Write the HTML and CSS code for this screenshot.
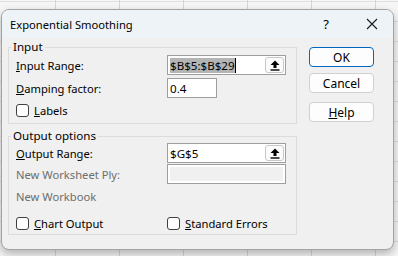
FILE: index.html
```html
<!DOCTYPE html>
<html lang="en">
<head>
    <meta charset="UTF-8">
    <meta name="viewport" content="width=device-width, initial-scale=1.0">
    <title>Exponential Smoothing</title>
    <link rel="stylesheet" href="styles.css">
</head>
<body>
    <div class="dialog">
        <div class="titlebar">
            <span class="title">Exponential Smoothing</span>
            <span class="help-mark">?</span>
            <svg class="close" width="12" height="12" viewBox="0 0 12 12">
                <path d="M1 1 L11 11 M11 1 L1 11" stroke="#1a1a1a" stroke-width="1.1" fill="none"/>
            </svg>
        </div>
        <div class="content">
            <div class="groups">
                <fieldset class="group input-group">
                    <legend>Input</legend>
                    <div class="row">
                        <div class="label"><u>I</u>nput Range:</div>
                        <div class="field wide">
                            <span class="value"><span class="selected">$B$5:$B$29</span><span class="caret"></span></span>
                            <span class="pick">
                                <svg width="10" height="11" viewBox="0 0 10 11">
                                    <path d="M5 0.5 L9.5 5 L6.5 5 L6.5 8 L3.5 8 L3.5 5 L0.5 5 Z" fill="#000"/>
                                    <rect x="0.5" y="9.3" width="9" height="1.4" fill="#000"/>
                                </svg>
                            </span>
                        </div>
                    </div>
                    <div class="row">
                        <div class="label"><u>D</u>amping factor:</div>
                        <div class="field short"><span class="value">0.4</span></div>
                    </div>
                    <div class="check-row">
                        <span class="box"></span><span><u>L</u>abels</span>
                    </div>
                </fieldset>
                <fieldset class="group output-group">
                    <legend>Output options</legend>
                    <div class="row">
                        <div class="label"><u>O</u>utput Range:</div>
                        <div class="field wide">
                            <span class="value">$G$5</span>
                            <span class="pick">
                                <svg width="10" height="11" viewBox="0 0 10 11">
                                    <path d="M5 0.5 L9.5 5 L6.5 5 L6.5 8 L3.5 8 L3.5 5 L0.5 5 Z" fill="#000"/>
                                    <rect x="0.5" y="9.3" width="9" height="1.4" fill="#000"/>
                                </svg>
                            </span>
                        </div>
                    </div>
                    <div class="row tight">
                        <div class="label disabled">New Worksheet Ply:</div>
                        <div class="field wide off"><span class="fill"></span></div>
                    </div>
                    <div class="row plain">
                        <div class="label disabled">New Workbook</div>
                    </div>
                    <div class="check-pair">
                        <div class="check-row"><span class="box"></span><span><u>C</u>hart Output</span></div>
                        <div class="check-row"><span class="box"></span><span><u>S</u>tandard Errors</span></div>
                    </div>
                </fieldset>
            </div>
            <div class="buttons">
                <button class="btn default">OK</button>
                <button class="btn">Cancel</button>
                <button class="btn help"><u>H</u>elp</button>
            </div>
        </div>
    </div>
</body>
</html>
```

FILE: styles.css
```css
body {
    margin: 0;
    padding: 9px 4px 0 1px;
    height: 256px;
    box-sizing: border-box;
    overflow: hidden;
    font-family: "Noto Sans", "Open Sans", sans-serif;
    font-size: 11.2px;
    color: #000;
    background-color: #f6f6f6;
    background-image:
        linear-gradient(90deg, #d6d6d6 1px, transparent 1px),
        linear-gradient(0deg, #dedede 1px, transparent 1px);
    background-size: 64px 20px;
    background-position: 55px 0, 0 2px;
}
.dialog {
    width: 393px;
    height: 241px;
    box-sizing: border-box;
    border: 1px solid #a3a3a3;
    border-radius: 8px;
    background-color: #f0f0f0;
    box-shadow: 0 4px 10px rgba(0, 0, 0, 0.28);
    overflow: hidden;
}
.titlebar {
    display: flex;
    align-items: center;
    height: 28px;
    background-color: #eef3f8;
    padding-left: 8px;
}
.title {
    flex: 1;
    font-size: 11.2px;
}
.help-mark {
    font-size: 13px;
    margin-right: 37px;
}
.close {
    margin-right: 15px;
}
.content {
    display: flex;
    padding-left: 6px;
}
.groups {
    width: 289px;
}
.group {
    margin: 2px 0 0;
    border: 1px solid #dcdcdc;
    padding: 1px 10px 0 7px;
    min-width: 0;
}
.group legend {
    padding: 0 2px;
    margin-left: -5px;
    line-height: 14px;
    font-size: 11.6px;
}
.output-group {
    margin-top: 5px;
    padding-top: 0;
    padding-bottom: 2px;
}
.row {
    display: flex;
    align-items: center;
    height: 20px;
    margin-bottom: 3px;
}
.row.tight {
    margin-top: -2px;
    margin-bottom: 0;
}
.row.plain {
    height: 25px;
}
.label {
    width: 151px;
}
.label.disabled {
    color: #6d6d6d;
}
.field {
    display: flex;
    align-items: center;
    height: 20px;
    box-sizing: border-box;
    border: 1px solid #9e9e9e;
    background-color: #fff;
    padding-left: 2px;
}
.field.wide {
    width: 119px;
}
.field.short {
    width: 50px;
}
.field.off {
    padding: 2px;
}
.fill {
    flex: 1;
    height: 100%;
    background-color: #f0f0f0;
}
.value {
    flex: 1;
    display: flex;
    align-items: center;
    font-size: 11.6px;
}
.selected {
    background-color: #b4b4b4;
    line-height: 15px;
}
.caret {
    width: 1px;
    height: 15px;
    background-color: #000;
}
.pick {
    display: flex;
    align-items: center;
    justify-content: center;
    width: 19px;
    height: 16px;
    margin-right: 1px;
    border: 1px solid #c8c8c8;
    border-radius: 3px;
    background-color: #fbfbfb;
    box-sizing: border-box;
}
.check-row {
    display: flex;
    align-items: center;
    height: 17px;
}
.input-group .check-row {
    margin: 4px 0 4px;
}
.box {
    width: 13px;
    height: 13px;
    box-sizing: border-box;
    border: 1px solid #404040;
    border-radius: 3px;
    background-color: #fff;
    margin-right: 5px;
}
.check-pair {
    display: flex;
    margin-top: 6px;
}
.check-pair .check-row:first-child {
    width: 151px;
}
.buttons {
    display: flex;
    flex-direction: column;
    margin-left: 12px;
    padding-top: 9px;
}
.btn {
    width: 65px;
    height: 20px;
    padding: 0;
    font-family: inherit;
    font-size: 12px;
    color: #000;
    background-color: #fdfdfd;
    border: 1px solid #d0d0d0;
    border-radius: 4px;
    margin-bottom: 6px;
}
.btn.default {
    border-color: #0067c0;
}
.btn.help {
    margin-top: 3px;
}
```
